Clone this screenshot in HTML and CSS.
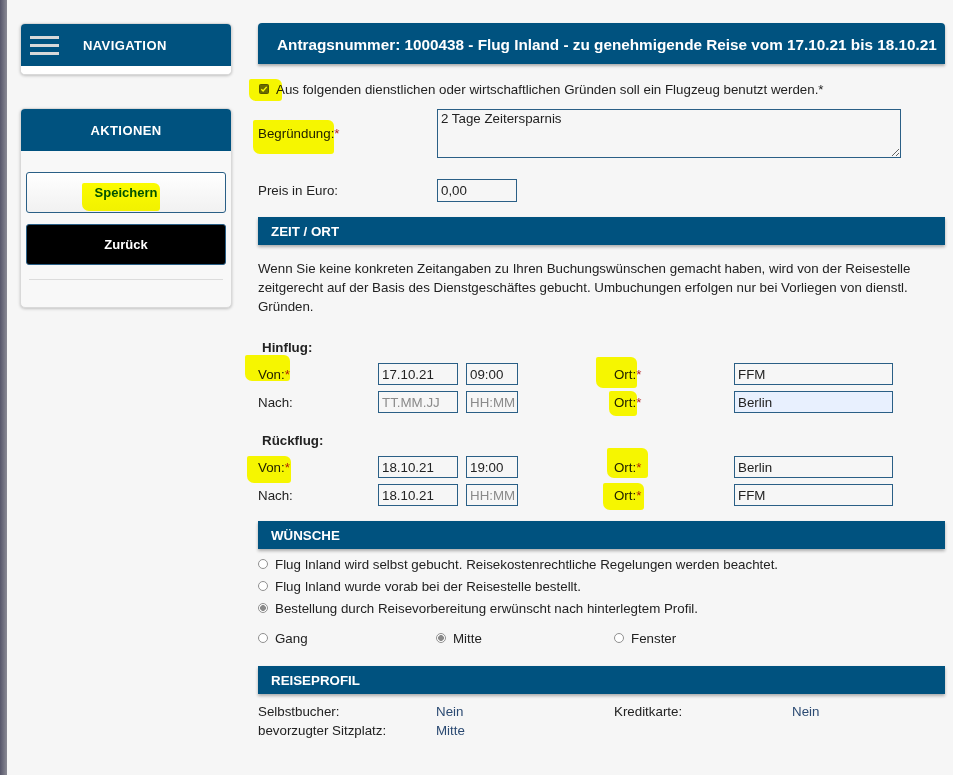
FILE: index.html
```html
<!DOCTYPE html>
<html lang="de">
<head>
<meta charset="utf-8">
<title>Antrag Flug Inland</title>
<link rel="stylesheet" href="styles.css">
</head>
<body>
<div class="app">
  <div class="edge"></div>
  <aside class="sidebar">
    <div class="panel nav">
      <div class="panel-head nav-head">
        <span class="burger"><i></i><i></i><i></i></span>
        <span class="nav-title">NAVIGATION</span>
      </div>
      <div class="nav-foot"></div>
    </div>
    <div class="panel actions">
      <div class="panel-head center">AKTIONEN</div>
      <div class="panel-body">
        <button class="btn btn-save"><span class="hl hl-save">Speichern</span></button>
        <button class="btn btn-back">Zurück</button>
        <div class="sep"></div>
      </div>
    </div>
  </aside>

  <main class="main">
    <div class="title-bar">Antragsnummer: 1000438 - Flug Inland - zu genehmigende Reise vom 17.10.21 bis 18.10.21</div>

    <div class="check-row">
      <span class="hl hl-check"><svg class="checkbox" width="10" height="10" viewBox="0 0 10 10"><rect x="0.5" y="0.5" width="9" height="9" rx="1" fill="#6a6a6a" stroke="#555"/><path d="M2.3 5.2 L4.1 7 L7.7 2.9" fill="none" stroke="#fff" stroke-width="1.4"/></svg></span>
      <span class="check-text">Aus folgenden dienstlichen oder wirtschaftlichen Gründen soll ein Flugzeug benutzt werden.*</span>
    </div>

    <div class="form-row reason-row">
      <label class="lbl"><span class="hl hl-reason">Begründung:</span><span class="req">*</span></label>
      <textarea class="area">2 Tage Zeitersparnis</textarea>
    </div>

    <div class="form-row price-row">
      <label class="lbl">Preis in Euro:</label>
      <div class="field price">0,00</div>
    </div>

    <div class="bar">ZEIT / ORT</div>

    <p class="info">Wenn Sie keine konkreten Zeitangaben zu Ihren Buchungswünschen gemacht haben, wird von der Reisestelle zeitgerecht auf der Basis des Dienstgeschäftes gebucht. Umbuchungen erfolgen nur bei Vorliegen von dienstl. Gründen.</p>

    <div class="flight first">
      <div class="flight-title">Hinflug:</div>
      <div class="flight-grid">
        <span class="lbl"><span class="hl hl-von1">Von:</span><span class="req">*</span></span>
        <div class="field date">17.10.21</div>
        <div class="field time">09:00</div>
        <span></span>
        <span class="lbl"><span class="hl hl-ort1">Ort:</span><span class="req">*</span></span>
        <div class="field loc">FFM</div>

        <span class="lbl">Nach:</span>
        <div class="field date ph">TT.MM.JJ</div>
        <div class="field time ph">HH:MM</div>
        <span></span>
        <span class="lbl"><span class="hl hl-ort2">Ort:</span><span class="req">*</span></span>
        <div class="field loc auto">Berlin</div>
      </div>
    </div>

    <div class="flight second">
      <div class="flight-title">Rückflug:</div>
      <div class="flight-grid">
        <span class="lbl"><span class="hl hl-von2">Von:</span><span class="req">*</span></span>
        <div class="field date">18.10.21</div>
        <div class="field time">19:00</div>
        <span></span>
        <span class="lbl"><span class="hl hl-ort3">Ort:</span><span class="req">*</span></span>
        <div class="field loc">Berlin</div>

        <span class="lbl">Nach:</span>
        <div class="field date">18.10.21</div>
        <div class="field time ph">HH:MM</div>
        <span></span>
        <span class="lbl"><span class="hl hl-ort4">Ort:</span><span class="req">*</span></span>
        <div class="field loc">FFM</div>
      </div>
    </div>

    <div class="bar">WÜNSCHE</div>

    <div class="options">
      <div class="opt"><span class="radio"></span>Flug Inland wird selbst gebucht. Reisekostenrechtliche Regelungen werden beachtet.</div>
      <div class="opt"><span class="radio"></span>Flug Inland wurde vorab bei der Reisestelle bestellt.</div>
      <div class="opt"><span class="radio on"></span>Bestellung durch Reisevorbereitung erwünscht nach hinterlegtem Profil.</div>
    </div>

    <div class="seats">
      <div class="opt"><span class="radio"></span>Gang</div>
      <div class="opt"><span class="radio on"></span>Mitte</div>
      <div class="opt"><span class="radio"></span>Fenster</div>
    </div>

    <div class="bar">REISEPROFIL</div>

    <div class="profile">
      <span>Selbstbucher:</span><span class="val">Nein</span><span>Kreditkarte:</span><span class="val">Nein</span>
      <span>bevorzugter Sitzplatz:</span><span class="val">Mitte</span><span></span><span></span>
    </div>
  </main>
</div>
</body>
</html>
```

FILE: styles.css
```css
* { box-sizing: border-box; }

body {
  margin: 0;
  background: #f6f6f6;
  font-family: "Liberation Sans", Arial, sans-serif;
  font-size: 13.33px;
  color: #222;
}

.app {
  display: flex;
  min-height: 775px;
}

.edge {
  flex: none;
  width: 7px;
  background: linear-gradient(to right, #56566a, #8a8a94);
}

/* ---------- sidebar ---------- */
.sidebar {
  flex: none;
  width: 212px;
  margin-left: 13px;
  padding-top: 23px;
}

.panel {
  background: #f8f8f8;
  border: 1px solid #d9d9d9;
  border-radius: 5px;
  box-shadow: 0 1px 3px rgba(0, 0, 0, 0.22);
  overflow: hidden;
}

.panel-head {
  background: #00527f;
  color: #fff;
  font-weight: bold;
  font-size: 13px;
  letter-spacing: 0.4px;
  height: 42px;
  display: flex;
  align-items: center;
}

.panel-head.center { justify-content: center; }

.nav-head { padding-left: 9px; }

.burger {
  display: flex;
  flex-direction: column;
  gap: 5px;
  width: 29px;
}

.burger i {
  display: block;
  height: 3px;
  background: #d8d8d8;
}

.nav-title { margin-left: 24px; }

.nav-foot {
  height: 8px;
  background: #fff;
}

.actions { margin-top: 33px; }

.panel-body {
  padding: 21px 5px 27px;
}

.btn {
  display: block;
  width: 200px;
  height: 41px;
  font-family: "Liberation Sans", Arial, sans-serif;
  font-weight: bold;
  font-size: 13px;
  border: 1px solid #2a5f86;
  border-radius: 3px;
  padding: 0;
}

.btn-save {
  background: linear-gradient(#ffffff, #f1f1f1);
  color: #00527f;
}

.btn-back {
  margin-top: 11px;
  background: #000;
  color: #fff;
}

.sep {
  margin: 14px 3px 0;
  border-top: 1px solid #dcdcdc;
}

/* ---------- main ---------- */
.main {
  width: 687px;
  margin-left: 26px;
  padding-top: 23px;
}

.title-bar {
  height: 41px;
  padding: 3px 0 0 19px;
  display: flex;
  align-items: center;
  background: #00527f;
  color: #fff;
  font-weight: bold;
  font-size: 15.3px;
  border-radius: 4px 4px 0 0;
  box-shadow: 0 2px 3px rgba(0, 0, 0, 0.3);
  white-space: nowrap;
}

.check-row {
  margin-top: 15px;
  height: 20px;
  display: flex;
  align-items: center;
  padding-left: 1px;
}

.checkbox { display: block; }

.check-text { margin-left: 7px; }

.form-row {
  display: grid;
  grid-template-columns: 179px auto;
  align-items: center;
}

.reason-row { margin-top: 10px; }
.price-row { margin-top: 21px; }

.lbl { color: #222; white-space: nowrap; }

.req { color: #b22222; }

.area {
  display: block;
  width: 464px;
  height: 49px;
  margin: 0;
  padding: 1px 3px;
  border: 1px solid #2a5f86;
  background: #f6f6f6;
  font-family: "Liberation Sans", Arial, sans-serif;
  font-size: 13.33px;
  color: #222;
  resize: both;
}

.field {
  height: 22px;
  padding: 0 3px;
  border: 1px solid #2a5f86;
  background: #f6f6f6;
  display: flex;
  align-items: center;
  color: #222;
  white-space: nowrap;
  overflow: hidden;
}

.field.ph { color: #8a8a8a; }
.field.auto { background: #e8f0fe; }

.price { width: 80px; height: 23px; }

.bar {
  height: 28px;
  padding-left: 13px;
  display: flex;
  align-items: center;
  background: #00527f;
  color: #fff;
  font-weight: bold;
  font-size: 13.33px;
  box-shadow: 0 2px 3px rgba(0, 0, 0, 0.3);
}

.price-row + .bar { margin-top: 15px; }

.info {
  margin: 14px 0 0;
  line-height: 19px;
  padding-right: 12px;
}

.flight.first { margin-top: 22px; }
.flight.second { margin-top: 18px; }

.flight-title {
  font-weight: bold;
  line-height: 19px;
  padding-left: 4px;
}

.flight-grid {
  margin-top: 6px;
  display: grid;
  grid-template-columns: 120px 88px 52px 96px 120px 159px;
  grid-auto-rows: 22px;
  row-gap: 6px;
  align-items: center;
}

.date { width: 80px; }
.time { width: 52px; }
.loc { width: 159px; }

.flight.second + .bar { margin-top: 15px; }

.options { margin-top: 4px; }

.opt {
  display: flex;
  align-items: center;
  height: 22px;
  white-space: nowrap;
}

.radio {
  flex: none;
  width: 10px;
  height: 10px;
  margin: 0 7px 0 0;
  border: 1px solid #909090;
  border-radius: 50%;
  background: #fff;
}

.radio.on {
  background: radial-gradient(circle, #8a8a8a 0 2.6px, #fff 3.2px);
}

.seats {
  margin-top: 8px;
  display: grid;
  grid-template-columns: 178px 178px 178px;
}

.seats + .bar { margin-top: 17px; }

.profile {
  margin-top: 8px;
  display: grid;
  grid-template-columns: 178px 178px 178px 153px;
  line-height: 19px;
}

.profile .val { color: #2b4a72; }

/* ---------- yellow marker highlights ---------- */
.hl { position: relative; display: inline-block; }

.hl::after {
  content: "";
  position: absolute;
  background: #ffff00;
  mix-blend-mode: multiply;
  border-radius: 2px 6px 3px 7px;
}

.hl-save::after { left: -13px; right: -3px; top: -2px; bottom: -11px; }
.hl-check::after { left: -10px; right: -13px; top: -5px; bottom: -7px; }
.hl-reason::after { left: -5px; right: 0; top: -6px; bottom: -13px; }
.hl-von1::after { left: -13px; right: -5px; top: -12px; bottom: 1px; }
.hl-von2::after { left: -11px; right: -6px; top: -4px; bottom: -8px; }
.hl-ort1::after { left: -18px; right: -1px; top: -10px; bottom: -6px; }
.hl-ort2::after { left: -5px; right: -1px; top: -4px; bottom: -6px; }
.hl-ort3::after { left: -7px; right: -12px; top: -12px; bottom: -3px; }
.hl-ort4::after { left: -11px; right: -8px; top: -5px; bottom: -7px; }
```
